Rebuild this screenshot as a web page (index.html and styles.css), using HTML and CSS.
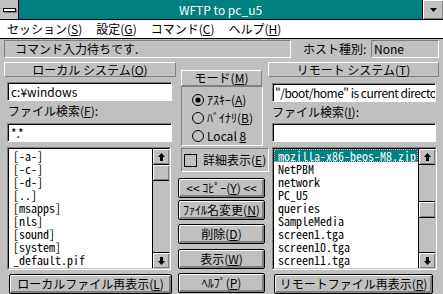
FILE: index.html
```html
<!DOCTYPE html>
<html lang="ja">
<head>
<meta charset="utf-8">
<title>WFTP to pc_u5</title>
<link rel="stylesheet" href="styles.css">
</head>
<body>
<div class="window">
  <div class="titlebar">
    <div class="sysmenu"><span class="sysbar"></span></div>
    <div class="title">WFTP to pc_u5</div>
    <div class="minbtn"><svg width="7" height="4" viewBox="0 0 7 4"><path d="M0 0H7L3.5 4Z" fill="#000"/></svg></div>
  </div>
  <div class="menubar">
    <span class="menu">セッション(<u>S</u>)</span>
    <span class="menu">設定(<u>G</u>)</span>
    <span class="menu">コマンド(<u>C</u>)</span>
    <span class="menu">ヘルプ(<u>H</u>)</span>
  </div>
  <div class="client">
    <div class="statusrow">
      <div class="status">コマンド入力待ちです.</div>
      <div class="hostlabel">ホスト種別:</div>
      <div class="hostval">None</div>
    </div>
    <div class="panes">
      <div class="side local">
        <div class="header">ローカル システム(<u>O</u>)</div>
        <div class="field path">c:¥windows</div>
        <div class="label">ファイル検索(<u>F</u>):</div>
        <div class="field filter">*.*</div>
        <div class="listbox">
          <div class="listinner">
            <ul class="items">
              <li>[-a-]</li>
              <li>[-c-]</li>
              <li>[-d-]</li>
              <li>[..]</li>
              <li>[msapps]</li>
              <li>[nls]</li>
              <li>[sound]</li>
              <li>[system]</li>
              <li>_default.pif</li>
            </ul>
            <div class="vscroll">
              <div class="sbtn up"><svg width="7" height="8" viewBox="0 0 7 8"><path d="M3.5 0L7 4H5V8H2V4H0Z" fill="#000"/></svg></div>
              <div class="track"><div class="thumb" style="margin-top:-1px"></div></div>
              <div class="sbtn down"><svg width="7" height="8" viewBox="0 0 7 8"><path d="M3.5 8L7 4H5V0H2V4H0Z" fill="#000"/></svg></div>
            </div>
          </div>
        </div>
        <div class="btn refresh">ローカルファイル再表示(<u>L</u>)</div>
      </div>

      <div class="middle">
        <div class="header mode">モード(<u>M</u>)</div>
        <div class="group">
          <div class="radio"><svg width="12" height="12" viewBox="0 0 12 12"><circle cx="6" cy="6" r="5.5" fill="none" stroke="#000"/><circle cx="6" cy="6" r="2.6" fill="#000"/></svg><span>ｱｽｷｰ(<u>A</u>)</span></div>
          <div class="radio"><svg width="12" height="12" viewBox="0 0 12 12"><circle cx="6" cy="6" r="5.5" fill="none" stroke="#000"/></svg><span>ﾊﾞｲﾅﾘ(<u>B</u>)</span></div>
          <div class="radio"><svg width="12" height="12" viewBox="0 0 12 12"><circle cx="6" cy="6" r="5.5" fill="none" stroke="#000"/></svg><span>Local <u>8</u></span></div>
        </div>
        <div class="checkrow"><span class="checkbox"></span><span class="checklabel">詳細表示(<u>E</u>)</span></div>
        <div class="btn mid b1">&lt;&lt; ｺﾋﾟｰ(<u>Y</u>) &lt;&lt;</div>
        <div class="btn mid b2">ﾌｧｲﾙ名変更(<u>N</u>)</div>
        <div class="btn mid b3">削除(<u>D</u>)</div>
        <div class="btn mid b4">表示(<u>W</u>)</div>
        <div class="btn mid b5">ﾍﾙﾌﾟ(<u>P</u>)</div>
      </div>

      <div class="side remote">
        <div class="header">リモート システム(<u>T</u>)</div>
        <div class="field path">"/boot/home" is current directory</div>
        <div class="label">ファイル検索(<u>I</u>):</div>
        <div class="field filter"></div>
        <div class="listbox">
          <div class="listinner">
            <ul class="items">
              <li class="selected">mozilla-x86-beos-M8.zip</li>
              <li>NetPBM</li>
              <li>network</li>
              <li>PC_U5</li>
              <li>queries</li>
              <li>SampleMedia</li>
              <li>screen1.tga</li>
              <li>screen10.tga</li>
              <li>screen11.tga</li>
            </ul>
            <div class="vscroll">
              <div class="sbtn up"><svg width="7" height="8" viewBox="0 0 7 8"><path d="M3.5 0L7 4H5V8H2V4H0Z" fill="#000"/></svg></div>
              <div class="track"><div class="thumb" style="margin-top:36px"></div></div>
              <div class="sbtn down"><svg width="7" height="8" viewBox="0 0 7 8"><path d="M3.5 8L7 4H5V0H2V4H0Z" fill="#000"/></svg></div>
            </div>
          </div>
        </div>
        <div class="btn refresh">リモートファイル再表示(<u>R</u>)</div>
      </div>
    </div>
  </div>
</div>
</body>
</html>
```
FILE: styles.css
```css
* { box-sizing: border-box; }
html, body { margin: 0; padding: 0; }
body {
  width: 443px;
  height: 294px;
  overflow: hidden;
  background: #c0c0c0;
  color: #000;
  font-family: "Noto Sans CJK JP", "Noto Sans", sans-serif;
  font-size: 12px;
  line-height: 14px;
}
u { text-decoration: underline; text-underline-offset: 1px; }

.window {
  width: 443px;
  height: 294px;
  display: flex;
  flex-direction: column;
  background: #c0c0c0;
}

/* title bar */
.titlebar { display: flex; height: 20px; border-bottom: 1px solid #000; flex: none; }
.sysmenu {
  width: 19px;
  border-right: 1px solid #000;
  background: #c0c0c0;
  display: flex;
  align-items: center;
  justify-content: center;
}
.sysbar {
  width: 13px;
  height: 4px;
  background: #fff;
  border: 1px solid #000;
  box-shadow: 1px 1px 0 #808080;
}
.title {
  flex: 1;
  background: #008080;
  color: #fff;
  text-align: center;
  line-height: 19px;
}
.minbtn {
  width: 21px;
  border-left: 1px solid #000;
  background: #c0c0c0;
  box-shadow: inset 1px 1px #fff, inset -1px -1px #808080;
  display: flex;
  align-items: center;
  justify-content: center;
}

/* menu bar */
.menubar {
  height: 19px;
  flex: none;
  background: #fff;
  border-bottom: 1px solid #000;
  display: flex;
  line-height: 18px;
}
.menu { padding: 0 7px; }

/* status row */
.client { flex: 1; display: flex; flex-direction: column; }
.statusrow { display: flex; height: 18px; margin-top: 1px; flex: none; }
.status {
  margin-left: 4px;
  width: 287px;
  border: 1px solid;
  border-color: #808080 #fff #fff #808080;
  padding-left: 10px;
  line-height: 16px;
}
.hostlabel { margin-left: 12px; line-height: 18px; }
.hostval {
  margin-left: auto;
  margin-right: 4px;
  width: 68px;
  border: 1px solid;
  border-color: #808080 #fff #fff #808080;
  padding-left: 2px;
  line-height: 16px;
}

/* panes */
.panes {
  display: grid;
  grid-template-columns: 172px 92px 171px;
  padding-left: 4px;
}
.side, .middle { display: flex; flex-direction: column; }

.header {
  height: 15px;
  margin-top: 4px;
  border: 1px solid;
  border-color: #fff #808080 #808080 #fff;
  text-align: center;
  line-height: 13px;
}
.field {
  height: 19px;
  background: #fff;
  border: 1px solid;
  border-color: #808080 #fff #fff #808080;
  box-shadow: inset 1px 1px #000;
  padding-left: 3px;
  line-height: 17px;
  white-space: nowrap;
  overflow: hidden;
}
.label { height: 20px; line-height: 20px; padding-left: 4px; }
.local .path { margin: 5px 4px 0 3px; }
.local .filter { margin: 2px 4px 0 3px; }
.local .listbox { margin: 5px 5px 0 3px; }
.local .refresh { margin: 4px 4px 0 5px; }
.remote .path { margin: 6px 3px 0 4px; letter-spacing: -0.5px; padding-left: 2px; }
.remote .filter { margin: 1px 3px 0 4px; }
.remote .listbox { margin: 5px 2px 0 4px; }
.remote .refresh { margin: 4px 6px 0 6px; }

.listbox {
  height: 123px;
  border: 1px solid;
  border-color: #808080 #fff #fff #808080;
}
.listinner {
  height: 100%;
  display: flex;
  border: 1px solid;
  border-color: #000 #c0c0c0 #c0c0c0 #000;
  background: #fff;
}
.items {
  flex: 1;
  min-width: 0;
  margin: 0;
  padding: 0;
  list-style: none;
  overflow: hidden;
  font-family: "Noto Sans Mono CJK JP", "DejaVu Sans Mono", monospace;
  font-size: 12px;
  line-height: 13px;
}
.items li { padding-left: 4px; white-space: nowrap; }
.items li.selected {
  background: #008080;
  color: #fff;
  outline: 1px dotted #c0c0c0;
  outline-offset: -1px;
}
.vscroll {
  width: 17px;
  flex: none;
  border-left: 1px solid #000;
  background: #c0c0c0;
  display: flex;
  flex-direction: column;
}
.sbtn {
  height: 16px;
  flex: none;
  background: #c0c0c0;
  box-shadow: inset 1px 1px #fff, inset -1px -1px #808080;
  display: flex;
  align-items: center;
  justify-content: center;
}
.sbtn.up { border-bottom: 1px solid #000; }
.sbtn.down { border-top: 1px solid #000; }
.track { flex: 1; overflow: hidden; }
.thumb {
  height: 17px;
  border-top: 1px solid #000;
  border-bottom: 1px solid #000;
  background: #c0c0c0;
  box-shadow: inset 1px 1px #fff, inset -1px -1px #808080;
}

/* buttons */
.btn {
  height: 20px;
  border: 1px solid #000;
  border-radius: 2px;
  background: #c0c0c0;
  box-shadow: inset 1px 1px #fff, inset -2px -2px #808080;
  text-align: center;
  line-height: 17px;
  white-space: nowrap;
  overflow: hidden;
}

/* middle column */
.mode { margin: 12px 6px 0 5px; height: 16px; }
.group {
  margin: 0 5px 0 5px;
  height: 60px;
  border: 1px solid;
  border-color: #808080 #fff #fff #808080;
  padding: 4px 0 0 10px;
}
.radio { display: flex; align-items: center; height: 18px; gap: 3px; white-space: nowrap; }
.radio svg { flex: none; }
.checkrow {
  margin: 2px 0 0 5px;
  width: 88px;
  height: 24px;
  border: 1px solid;
  border-color: #808080 #fff #fff #808080;
  display: flex;
  align-items: center;
  padding-left: 2px;
  white-space: nowrap;
  overflow: hidden;
}
.checkbox {
  flex: none;
  width: 13px;
  height: 13px;
  border: 1px solid #000;
  margin-right: 6px;
}
.mid { margin-left: 2px; width: 87px; }
.b1 { margin-top: 6px; }
.b2 { margin-top: 2px; }
.b3 { margin-top: 4px; }
.b4 { margin-top: 5px; }
.b5 { margin-top: 4px; }
```
